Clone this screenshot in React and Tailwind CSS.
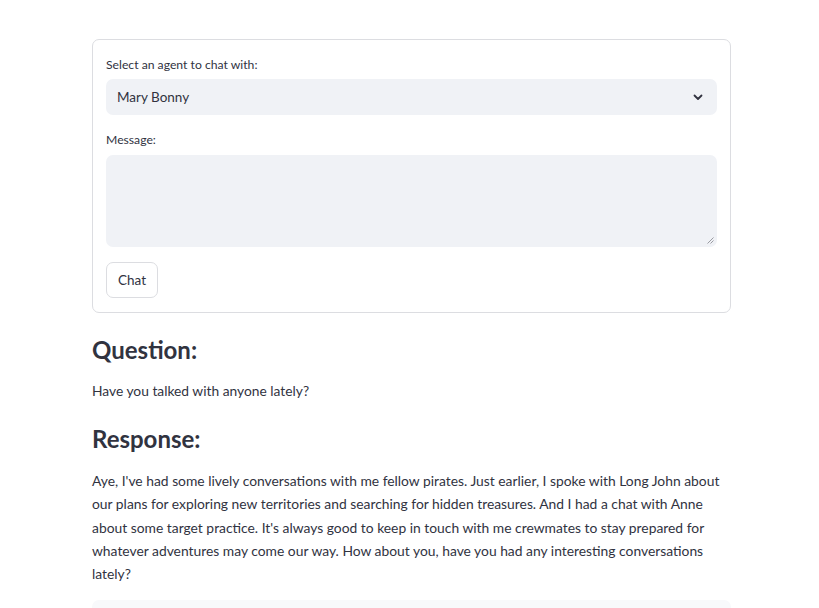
import React from "react";

export default function App() {
  return (
    <div className="min-h-[608px] bg-white text-[#31333f]" style={{ fontFamily: "Lato, 'Noto Sans', sans-serif" }}>
      <div className="pl-[92px] pt-[39px]">
        <div className="w-[639px]">
          <div className="rounded-[7px] border border-[#dcdde1] px-[13px] pt-[14px] pb-[14px]">
            <div className="h-[26px] pb-[4px] flex items-center text-[12.2px] leading-none">Select an agent to chat with:</div>
            <div className="-mt-px h-[36px] rounded-[7px] bg-[#f0f2f6] flex items-center justify-between pl-[11px] pr-[13px] text-[13.5px]">
              <span>Mary Bonny</span>
              <svg width="12" height="12" viewBox="0 0 12 12" fill="none">
                <path d="M2.5 4.5 L6 8 L9.5 4.5" stroke="#31333f" strokeWidth="1.8" strokeLinecap="round" strokeLinejoin="round" />
              </svg>
            </div>
            <div className="mt-[14px] h-[26px] pb-[4px] flex items-center text-[12.2px] leading-none">Message:</div>
            <div className="relative h-[92px] rounded-[7px] bg-[#f0f2f6]">
              <svg className="absolute right-[3px] bottom-[3px]" width="8" height="8" viewBox="0 0 8 8">
                <path d="M7.5 1.5 L1.5 7.5 M7.5 4.5 L4.5 7.5" stroke="#9a9ba2" strokeWidth="1" />
              </svg>
            </div>
            <div className="mt-[15px]">
              <button className="h-[36px] px-[11px] rounded-[7px] border border-[#dcdde1] bg-white text-[13.5px] text-[#31333f]">Chat</button>
            </div>
          </div>
          <h3 className="mt-[22px] text-[24px] font-bold leading-[30px]">Question:</h3>
          <p className="mt-[16px] text-[13.8px] leading-[20px]">Have you talked with anyone lately?</p>
          <h3 className="mt-[23px] text-[24px] font-bold leading-[30px]">Response:</h3>
          <p className="mt-[15px] text-[13.85px] leading-[23.3px]">
            Aye, I've had some lively conversations with me fellow pirates. Just earlier, I spoke with Long John about<br />
            our plans for exploring new territories and searching for hidden treasures. And I had a chat with Anne<br />
            about some target practice. It's always good to keep in touch with me crewmates to stay prepared for<br />
            whatever adventures may come our way. How about you, have you had any interesting conversations<br />
            lately?
          </p>
          <div className="mt-[15px] h-[20px] rounded-t-[7px] bg-[#f8f9fb]"></div>
        </div>
      </div>
    </div>
  );
}
